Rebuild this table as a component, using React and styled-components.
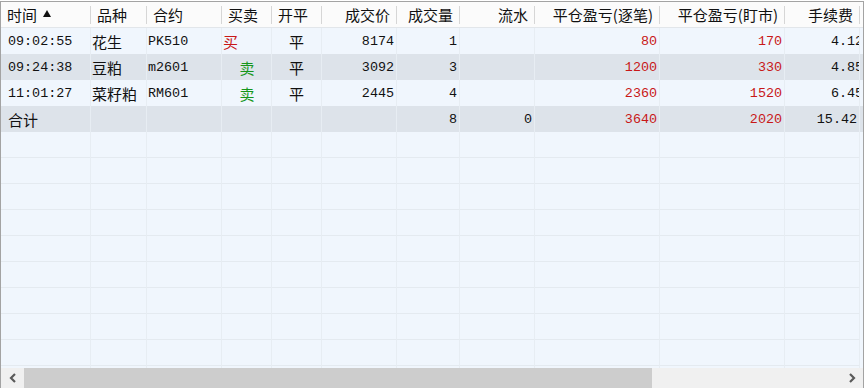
import React from 'react';
import styled, { createGlobalStyle } from 'styled-components';

const GlobalStyle = createGlobalStyle`
  html, body {
    margin: 0;
    padding: 0;
    background: #ffffff;
  }
  body {
    padding-top: 1px;
  }
`;

const COLS = '90px 56px 75px 50px 50px 75px 63px 75px 125px 125px 75px';

const CJK = `"Noto Sans CJK SC", "Noto Sans", sans-serif`;
const MONO = `"Liberation Mono", "Noto Sans CJK SC", monospace`;

const Frame = styled.div`
  width: 864px;
  height: 387px;
  box-sizing: border-box;
  border: 1px solid #a3a3a3;
  border-bottom: none;
  display: flex;
  flex-direction: column;
  background: #f0f6fd;
`;

const Viewport = styled.div`
  flex: 1;
  overflow: hidden;
  min-height: 0;
`;

const Row = styled.div`
  display: grid;
  grid-template-columns: ${COLS};
  height: 26px;
  background: ${p => (p.$head ? '#fbfbfb' : p.$shade ? '#dde3ea' : '#f0f6fd')};
  border-bottom: ${p => (p.$head ? '1px solid #e2e6ea' : 'none')};
  box-sizing: border-box;
`;

const HeadCell = styled.div`
  display: flex;
  align-items: center;
  justify-content: ${p => (p.$align === 'right' ? 'flex-end' : 'flex-start')};
  padding: ${p => (p.$align === 'right' ? '0 7px 0 0' : '0 0 0 6px')};
  font-family: ${CJK};
  font-size: 15px;
  color: #111;
  white-space: nowrap;
  position: relative;
  &::after {
    content: '';
    position: absolute;
    right: 0;
    top: 4px;
    bottom: 3px;
    width: 1px;
    background: #d6d6d6;
  }
`;

const SortMark = styled.svg`
  margin-left: 6px;
  margin-top: -2px;
`;

const Cell = styled.div`
  display: flex;
  align-items: center;
  justify-content: ${p =>
    p.$align === 'right' ? 'flex-end' : p.$align === 'center' ? 'center' : 'flex-start'};
  padding: 0 ${p => (p.$align === 'right' ? '2px' : '0')} 0 ${p => p.$pad || 0}px;
  border-right: 1px solid #e7edf3;
  border-bottom: ${p => (p.$filler ? '1px solid #e4eaf0' : 'none')};
  box-sizing: border-box;
  overflow: hidden;
  white-space: nowrap;
  font-family: ${p => (p.$cjk ? CJK : MONO)};
  font-size: ${p => (p.$cjk ? '15px' : '13.4px')};
  color: ${p => (p.$tone === 'red' ? '#c81818' : p.$tone === 'green' ? '#16961b' : '#111')};
`;

const Scrollbar = styled.div`
  height: 20px;
  display: flex;
  align-items: stretch;
  background: #f0f0f0;
  flex-shrink: 0;
`;

const ScrollButton = styled.div`
  width: ${p => p.$w}px;
  flex-shrink: 0;
  display: flex;
  align-items: center;
  justify-content: center;
  background: #f0f0f0;
  color: #5a5a5a;
`;

const Thumb = styled.div`
  width: 628px;
  flex-shrink: 0;
  background: #cdcdcd;
`;

const Track = styled.div`
  flex: 1;
`;

const columns = [
  { title: '时间', align: 'left', sort: true },
  { title: '品种', align: 'left' },
  { title: '合约', align: 'left' },
  { title: '买卖', align: 'left' },
  { title: '开平', align: 'left' },
  { title: '成交价', align: 'right' },
  { title: '成交量', align: 'right' },
  { title: '流水', align: 'right' },
  { title: '平仓盈亏(逐笔)', align: 'right' },
  { title: '平仓盈亏(盯市)', align: 'right' },
  { title: '手续费', align: 'right' }
];

const trades = [
  { time: '09:02:55', name: '花生', code: 'PK510', side: '买', oc: '平', price: '8174', qty: '1', flow: '', pnl: '80', mtm: '170', fee: '4.125' },
  { time: '09:24:38', name: '豆粕', code: 'm2601', side: '卖', oc: '平', price: '3092', qty: '3', flow: '', pnl: '1200', mtm: '330', fee: '4.855' },
  { time: '11:01:27', name: '菜籽粕', code: 'RM601', side: '卖', oc: '平', price: '2445', qty: '4', flow: '', pnl: '2360', mtm: '1520', fee: '6.455' }
];

const TradeRow = ({ t, shade }) => {
  const buy = t.side === '买';
  return (
    <Row $shade={shade}>
      <Cell $pad={7}>{t.time}</Cell>
      <Cell $cjk $pad={1}>{t.name}</Cell>
      <Cell $pad={1}>{t.code}</Cell>
      <Cell $cjk $pad={1} $align={buy ? 'left' : 'center'} $tone={buy ? 'red' : 'green'}>
        {t.side}
      </Cell>
      <Cell $cjk $align='center'>{t.oc}</Cell>
      <Cell $align='right'>{t.price}</Cell>
      <Cell $align='right'>{t.qty}</Cell>
      <Cell $align='right'>{t.flow}</Cell>
      <Cell $align='right' $tone='red'>{t.pnl}</Cell>
      <Cell $align='right' $tone='red'>{t.mtm}</Cell>
      <Cell $pad={46}>{t.fee}</Cell>
    </Row>
  );
};

// small scroll arrow, drawn as a chevron
const Chevron = ({ dir }) => (
  <svg width='10' height='12' viewBox='0 0 10 12' style={{ display: 'block' }}>
    <path
      d={dir === 'left' ? 'M7 2 L3 6 L7 10' : 'M3 2 L7 6 L3 10'}
      fill='none'
      stroke='currentColor'
      strokeWidth='2.2'
    />
  </svg>
);

const App = () => {
  const fillers = Array.from({ length: 10 });

  return (
    <>
      <GlobalStyle />
      <Frame>
        <Viewport>
          <Row $head>
            {columns.map(c => (
              <HeadCell key={c.title} $align={c.align}>
                {c.title}
                {c.sort && (
                  <SortMark width='8' height='7' viewBox='0 0 8 7'>
                    <polygon points='4,0 8,7 0,7' fill='#111' />
                  </SortMark>
                )}
              </HeadCell>
            ))}
          </Row>

          {trades.map((t, i) => (
            <TradeRow key={t.time} t={t} shade={i % 2 === 1} />
          ))}

          <Row $shade>
            <Cell $cjk $pad={7}>合计</Cell>
            <Cell />
            <Cell />
            <Cell />
            <Cell />
            <Cell />
            <Cell $align='right'>8</Cell>
            <Cell $align='right'>0</Cell>
            <Cell $align='right' $tone='red'>3640</Cell>
            <Cell $align='right' $tone='red'>2020</Cell>
            <Cell $align='right'>15.42</Cell>
          </Row>

          {fillers.map((_, i) => (
            <Row key={i}>
              {columns.map(c => (
                <Cell key={c.title} $filler />
              ))}
            </Row>
          ))}
        </Viewport>

        <Scrollbar>
          <ScrollButton $w={23}>
            <Chevron dir='left' />
          </ScrollButton>
          <Thumb />
          <Track />
          <ScrollButton $w={22}>
            <Chevron dir='right' />
          </ScrollButton>
        </Scrollbar>
      </Frame>
    </>
  );
};

export default App;
